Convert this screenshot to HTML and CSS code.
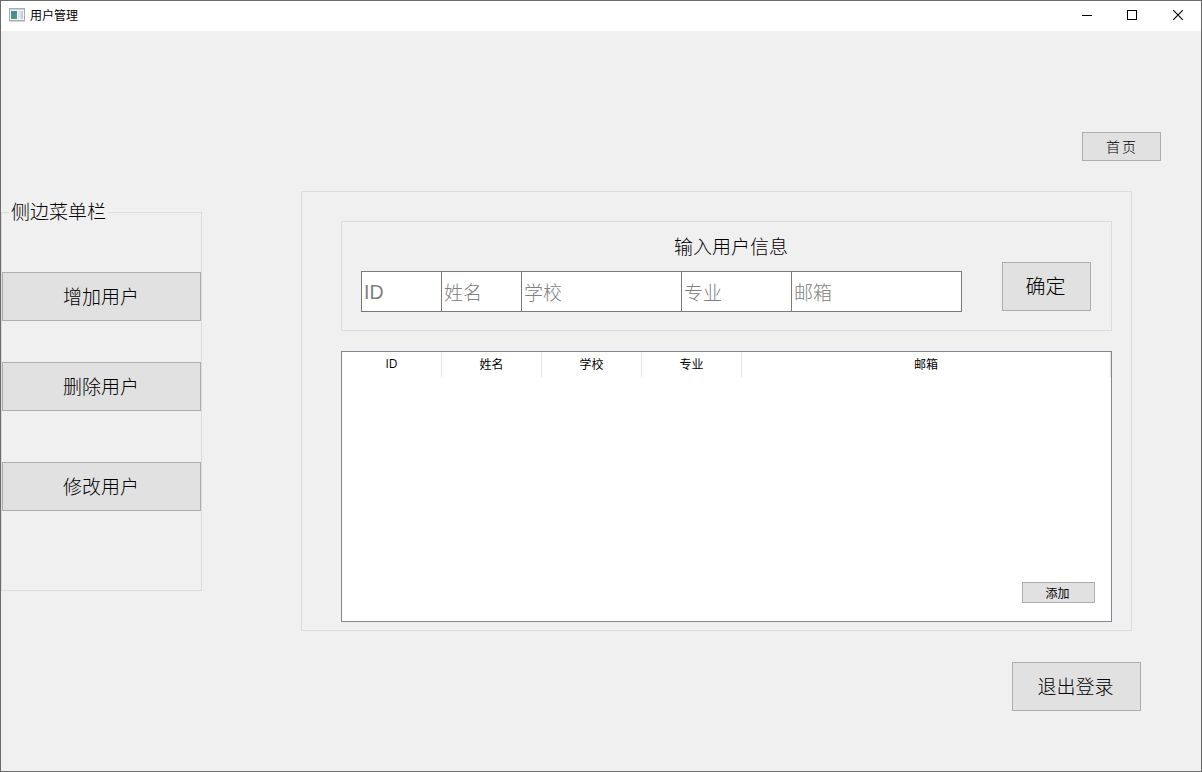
FILE: index.html
```html
<!DOCTYPE html>
<html lang="zh-CN">
<head>
<meta charset="utf-8">
<title>用户管理</title>
<link rel="stylesheet" href="styles.css">
</head>
<body>
<div class="window">
  <header class="titlebar">
    <svg class="app-icon" width="16" height="14" viewBox="0 0 16 14" shape-rendering="crispEdges">
      <defs><linearGradient id="pane" x1="0" y1="0" x2="0.6" y2="1"><stop offset="0" stop-color="#4b7fa8"/><stop offset="1" stop-color="#4d9b78"/></linearGradient></defs>
      <rect x=".5" y=".5" width="15" height="12" fill="#f2f4f5" stroke="#a5acb2"/>
      <path d="M1 1.5h14" stroke="#c9d0d6"/>
      <rect x="2" y="3" width="6" height="8" fill="url(#pane)"/>
      <rect x="9" y="3" width="3" height="8" fill="#e1e5e8"/>
      <rect x="12" y="3" width="2" height="8" fill="#c4ced6"/>
      <path d="M0 13.5h16" stroke="#d4d4d4"/>
    </svg>
    <span class="title">用户管理</span>
    <div class="controls">
      <svg width="46" height="30" viewBox="0 0 46 30"><path d="M19 14.5h10" stroke="#000"/></svg>
      <svg width="46" height="30" viewBox="0 0 46 30"><rect x="18.5" y="9.5" width="9" height="9" fill="none" stroke="#000"/></svg>
      <svg width="46" height="30" viewBox="0 0 46 30"><path d="M18.2 9.2l9.6 9.6M27.8 9.2l-9.6 9.6" stroke="#000" stroke-width="1.1"/></svg>
    </div>
  </header>
  <main class="content">
    <div class="top-row"><button class="btn home">首页</button></div>
    <div class="middle">
      <fieldset class="sidebar">
        <legend>侧边菜单栏</legend>
        <button class="btn menu">增加用户</button>
        <button class="btn menu">删除用户</button>
        <button class="btn menu">修改用户</button>
      </fieldset>
      <section class="panel">
        <div class="form">
          <div class="form-fields">
            <div class="form-title">输入用户信息</div>
            <div class="inputs">
              <input class="latin" placeholder="ID">
              <input placeholder="姓名">
              <input placeholder="学校">
              <input placeholder="专业">
              <input placeholder="邮箱">
            </div>
          </div>
          <button class="btn confirm">确定</button>
        </div>
        <div class="table">
          <div class="table-head">
            <span class="latin">ID</span><span>姓名</span><span>学校</span><span>专业</span><span>邮箱</span>
          </div>
          <button class="btn add">添加</button>
        </div>
      </section>
    </div>
    <div class="bottom-row"><button class="btn logout">退出登录</button></div>
  </main>
</div>
</body>
</html>
```
FILE: styles.css
```css
* { box-sizing: border-box; }
body { margin: 0; overflow: hidden; color: #000; font-family: "Noto Sans CJK SC", sans-serif; }
.window { width: 1202px; height: 772px; border: 1px solid #6b6b6b; background: #f0f0f0; display: flex; flex-direction: column; }
.titlebar { height: 30px; flex: none; background: #fff; display: flex; align-items: center; padding-left: 8px; }
.app-icon { flex: none; margin-top: -2px; }
.title { margin-left: 5px; font-size: 12px; line-height: 28px; padding-bottom: 2px; }
.controls { margin-left: auto; display: flex; }
.controls svg { display: block; }
.content { flex: 1; display: flex; flex-direction: column; }
.btn { display: flex; align-items: center; justify-content: center; flex: none; margin: 0; padding: 0 0 2px; border: 1px solid #adadad; background: #e1e1e1; color: #000; font-family: "Noto Sans CJK SC", sans-serif; font-weight: 300; font-size: 19px; line-height: 1; white-space: nowrap; }
.top-row { display: flex; justify-content: flex-end; padding: 101px 40px 0 0; }
.home { width: 79px; height: 29px; font-size: 14px; letter-spacing: 2px; padding-left: 1px; }
.middle { display: flex; align-items: flex-start; justify-content: space-between; padding: 30px 69px 0 0; }
.sidebar { width: 201px; height: 391px; margin: 9px 0 0; padding: 48px 0 0; border: 1px solid #dcdcdc; display: flex; flex-direction: column; min-width: 0; }
.sidebar legend { margin-left: 7px; padding: 0 2px; font-size: 19px; line-height: 22px; height: 24px; font-weight: 300; }
.menu { width: 199px; height: 49px; margin-bottom: 41px; padding-right: 1px; }
.menu:nth-of-type(2) { margin-bottom: 51px; }
.panel { width: 831px; height: 440px; border: 1px solid #dcdcdc; padding: 29px 19px 0 39px; }
.form { height: 110px; border: 1px solid #dcdcdc; padding: 0 20px 0 19px; display: flex; justify-content: space-between; }
.form-fields { padding-top: 12px; }
.form-title { height: 37px; line-height: 24px; font-size: 19px; font-weight: 300; padding-left: 313px; }
.inputs { width: 601px; height: 41px; display: grid; grid-template-columns: 80px 80px 160px 110px 169px; border: 1px solid #7a7a7a; background: #fff; }
.inputs input { min-width: 0; border: 0; border-right: 1px solid #7a7a7a; padding: 0 0 1px 2px; margin: 0; background: #fff; outline: 0; font: 300 19px "Noto Sans CJK SC", sans-serif; }
.inputs input:last-child { border-right: 0; }
.inputs input.latin { font: 19.5px "Liberation Sans", sans-serif; padding-top: 2px; }
.inputs input::placeholder { color: #808080; opacity: 1; }
.confirm { width: 89px; height: 49px; margin-top: 40px; font-size: 20px; padding-right: 2px; }
.table { height: 271px; margin-top: 20px; border: 1px solid #828790; background: #fff; display: flex; flex-direction: column; justify-content: space-between; align-items: flex-end; padding-bottom: 18px; }
.table-head { width: 769px; height: 25px; display: grid; grid-template-columns: 100px 100px 100px 100px 369px; font-size: 12px; line-height: 24px; text-align: center; }
.table-head span { border-right: 1px solid #e5e5e5; }
.table-head .latin { font-family: "Open Sans", sans-serif; }
.add { width: 73px; height: 21px; margin-right: 16px; font-size: 12px; font-weight: 400; padding: 0 2px 0 0; }
.bottom-row { display: flex; justify-content: flex-end; padding: 31px 60px 0 0; }
.logout { width: 129px; height: 49px; padding-right: 2px; }
```
